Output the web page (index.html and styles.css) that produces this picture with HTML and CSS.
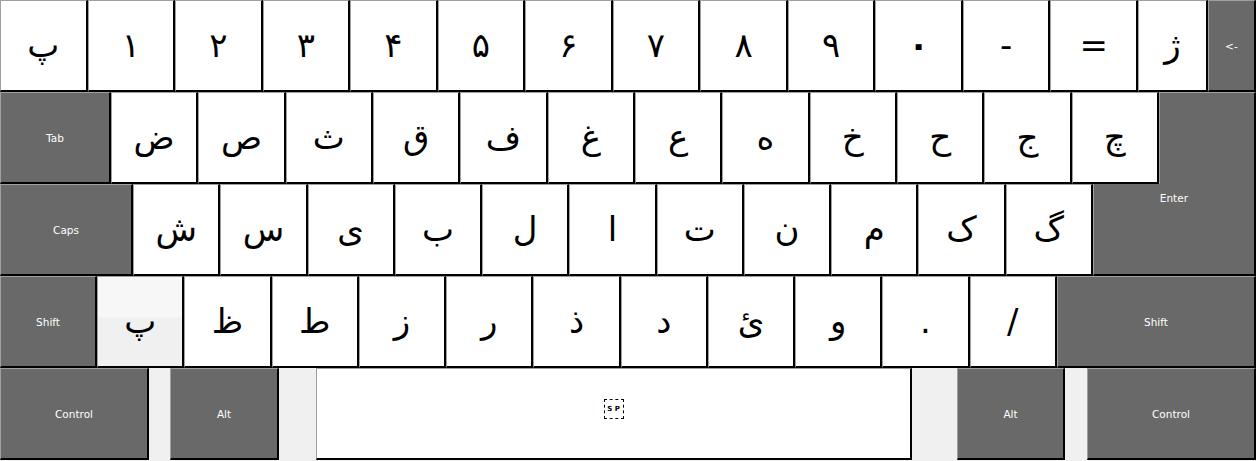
FILE: index.html
```html
<!DOCTYPE html>
<html lang="fa">
<head>
<meta charset="utf-8">
<title>Persian Keyboard</title>
<link rel="stylesheet" href="styles.css">
</head>
<body>
<div class="keyboard">
  <div class="row">
    <div class="key char">پ</div>
    <div class="key char">١</div>
    <div class="key char">٢</div>
    <div class="key char">٣</div>
    <div class="key char">۴</div>
    <div class="key char">۵</div>
    <div class="key char">۶</div>
    <div class="key char">٧</div>
    <div class="key char">٨</div>
    <div class="key char">٩</div>
    <div class="key char zero">٠</div>
    <div class="key char">-</div>
    <div class="key char">=</div>
    <div class="key char zhe">ژ</div>
    <div class="key fn bksp">&lt;-</div>
  </div>
  <div class="row">
    <div class="key fn tab">Tab</div>
    <div class="key char">ض</div>
    <div class="key char">ص</div>
    <div class="key char">ث</div>
    <div class="key char">ق</div>
    <div class="key char">ف</div>
    <div class="key char">غ</div>
    <div class="key char">ع</div>
    <div class="key char">ه</div>
    <div class="key char">خ</div>
    <div class="key char">ح</div>
    <div class="key char">ج</div>
    <div class="key char">چ</div>
    <div class="key fn enter-top"></div>
  </div>
  <div class="row">
    <div class="key fn caps">Caps</div>
    <div class="key char">ش</div>
    <div class="key char">س</div>
    <div class="key char">ی</div>
    <div class="key char">ب</div>
    <div class="key char">ل</div>
    <div class="key char">ا</div>
    <div class="key char">ت</div>
    <div class="key char">ن</div>
    <div class="key char">م</div>
    <div class="key char">ک</div>
    <div class="key char">گ</div>
    <div class="key fn enter-bottom">Enter</div>
  </div>
  <div class="row">
    <div class="key fn lshift">Shift</div>
    <div class="key char hover">پ</div>
    <div class="key char">ظ</div>
    <div class="key char">ط</div>
    <div class="key char">ز</div>
    <div class="key char">ر</div>
    <div class="key char">ذ</div>
    <div class="key char">د</div>
    <div class="key char">ئ</div>
    <div class="key char">و</div>
    <div class="key char">.</div>
    <div class="key char">/</div>
    <div class="key fn rshift">Shift</div>
  </div>
  <div class="row bottom">
    <div class="key fn lctrl">Control</div>
    <div class="key fn lalt">Alt</div>
    <div class="key space"><span class="sp">S P</span></div>
    <div class="key fn ralt">Alt</div>
    <div class="key fn rctrl">Control</div>
  </div>
</div>
</body>
</html>
```

FILE: styles.css
```css
html, body {
  margin: 0;
  padding: 0;
  background: #f0f0f0;
}
.keyboard {
  width: 1256px;
  height: 461px;
  display: flex;
  flex-direction: column;
}
.row {
  display: flex;
  height: 92px;
}
.key {
  box-sizing: border-box;
  height: 92px;
  display: flex;
  align-items: center;
  justify-content: center;
  border-top: 1px solid #a0a0a0;
  border-left: 1px solid #a0a0a0;
  border-right: 2px solid #000;
  border-bottom: 2px solid #000;
}
.char {
  flex: 1 1 0;
  background: #fff;
  color: #000;
  font-family: "DejaVu Sans", sans-serif;
  font-size: 34px;
  padding-bottom: 2px;
}
.zero { font-weight: bold; }
.char.hover {
  background: linear-gradient(#f7f7f7 0%, #f7f7f7 45%, #f0f0f0 46%, #f0f0f0 100%);
}
.fn {
  flex: none;
  background: #696969;
  color: #fff;
  font-family: "DejaVu Sans", "Noto Sans", sans-serif;
  font-size: 10.5px;
}
.zhe { flex: none; width: 70px; }
.bksp { width: 48px; }
.tab { width: 111px; }
.caps { width: 133px; }
.enter-top {
  width: 97px;
  border-bottom: none;
}
.enter-bottom {
  width: 163px;
  border-top: none;
  align-items: flex-start;
  padding-top: 8px;
}
.lshift { width: 97px; }
.rshift { width: 199px; }
.bottom { height: 93px; }
.bottom .key { height: 92px; }
.lctrl { width: 149px; }
.lalt { width: 109px; margin-left: 21px; }
.space {
  width: 596px;
  margin-left: 37px;
  background: #fff;
}
.ralt { width: 108px; margin-left: 45px; }
.rctrl { width: 169px; margin-left: 22px; }
.sp {
  box-sizing: border-box;
  width: 20px;
  height: 20px;
  border: 1px dashed #000;
  display: flex;
  align-items: center;
  justify-content: center;
  font-family: "DejaVu Sans", sans-serif;
  font-weight: bold;
  font-size: 7px;
  color: #000;
  margin-bottom: 9px;
}
```
